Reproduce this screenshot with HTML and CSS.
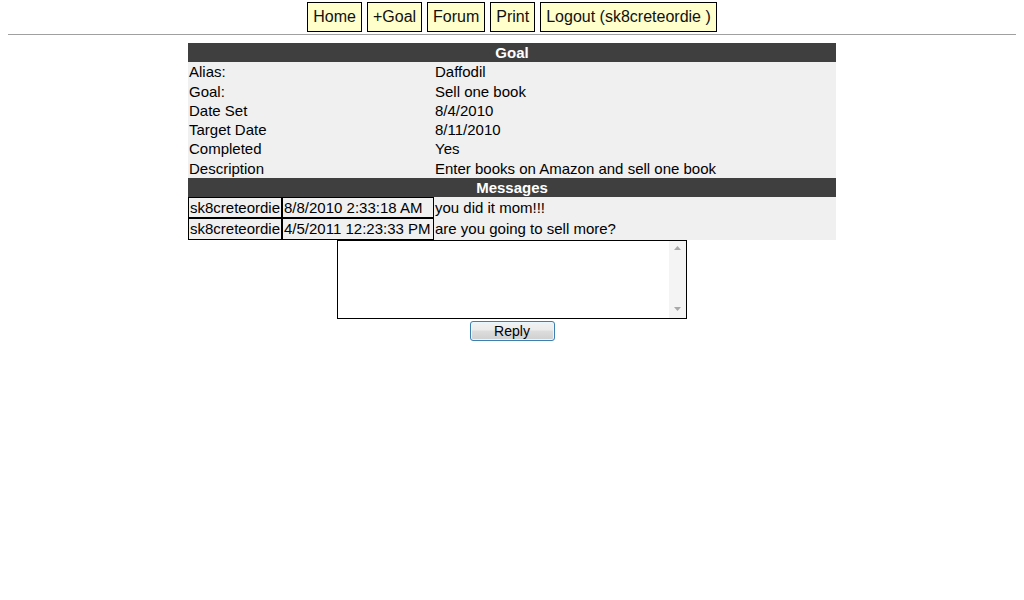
FILE: index.html
```html
<!DOCTYPE html>
<html>
<head>
<meta charset="utf-8">
<title>Goal</title>
<link rel="stylesheet" href="styles.css">
</head>
<body>
<div class="nav">
  <a class="navbtn" href="#">Home</a>
  <a class="navbtn" href="#">+Goal</a>
  <a class="navbtn" href="#">Forum</a>
  <a class="navbtn" href="#">Print</a>
  <a class="navbtn" href="#">Logout (sk8creteordie )</a>
</div>
<hr class="rule">
<table class="goal">
  <colgroup>
    <col class="c1"><col class="c2"><col class="c3">
  </colgroup>
  <tr><th colspan="3" class="head">Goal</th></tr>
  <tr><td colspan="2">Alias:</td><td>Daffodil</td></tr>
  <tr><td colspan="2">Goal:</td><td>Sell one book</td></tr>
  <tr><td colspan="2">Date Set</td><td>8/4/2010</td></tr>
  <tr><td colspan="2">Target Date</td><td>8/11/2010</td></tr>
  <tr><td colspan="2">Completed</td><td>Yes</td></tr>
  <tr><td colspan="2">Description</td><td>Enter books on Amazon and sell one book</td></tr>
  <tr><th colspan="3" class="head">Messages</th></tr>
  <tr class="mrow"><td class="box">sk8creteordie</td><td class="box">8/8/2010 2:33:18 AM</td><td>you did it mom!!!</td></tr>
  <tr class="mrow"><td class="box">sk8creteordie</td><td class="box">4/5/2011 12:23:33 PM</td><td>are you going to sell more?</td></tr>
</table>
<div class="reply">
  <div class="msgbox">
    <textarea class="msg"></textarea>
    <div class="sbar">
      <svg class="arr" width="7" height="4" viewBox="0 0 7 4"><path d="M0 4 L3.5 0 L7 4 Z" fill="#a8a8a8"/></svg>
      <svg class="arr" width="7" height="4" viewBox="0 0 7 4"><path d="M0 0 L3.5 4 L7 0 Z" fill="#a8a8a8"/></svg>
    </div>
  </div>
  <button class="replybtn" type="button">Reply</button>
</div>
</body>
</html>
```

FILE: styles.css
```css
html, body {
  background: #ffffff;
}
body {
  margin: 0 8px;
  font-family: "Liberation Sans", Arial, sans-serif;
  color: #000;
}
.nav {
  display: flex;
  justify-content: center;
  gap: 5px;
  padding-top: 2px;
  height: 30px;
}
.navbtn {
  display: block;
  box-sizing: border-box;
  height: 30px;
  padding: 5px;
  border: 1px solid #000;
  background: #ffffcc;
  color: #111;
  text-decoration: none;
  font-size: 16px;
  line-height: 18px;
}
.rule {
  margin: 2px 0 0 0;
  height: 0;
  border: 0;
  border-top: 1px solid #a0a0a0;
}
.goal {
  margin: 8px auto 0;
  width: 648px;
  table-layout: fixed;
  border-collapse: separate;
  border-spacing: 0;
  background: #f0f0f0;
  font-size: 15px;
  line-height: 17.25px;
}
.c1 { width: 94px; }
.c2 { width: 152px; }
.c3 { width: 402px; }
.goal td, .goal th {
  padding: 1px;
  text-align: left;
  white-space: nowrap;
  vertical-align: middle;
}
.goal th.head {
  background: #3f3f3f;
  color: #ffffff;
  font-weight: bold;
  text-align: center;
}
.goal td.box {
  border: 1px solid #000;
}
.reply {
  display: flex;
  flex-direction: column;
  align-items: center;
}
.msgbox {
  display: flex;
  box-sizing: border-box;
  width: 350px;
  height: 79px;
  border: 1px solid #000;
  background: #fff;
}
.msg {
  flex: 1;
  border: 0;
  margin: 0;
  padding: 2px;
  resize: none;
  outline: none;
  background: #fff;
  font-family: "Liberation Sans", Arial, sans-serif;
  font-size: 13px;
}
.sbar {
  width: 17px;
  background: #f4f4f4;
  display: flex;
  flex-direction: column;
  justify-content: space-between;
  align-items: center;
  padding: 5px 0 7px;
  box-sizing: border-box;
}
.arr {
  display: block;
}
.replybtn {
  margin-top: 2px;
  box-sizing: border-box;
  width: 85px;
  height: 20px;
  padding: 0;
  border: 1px solid #3c7fb1;
  border-radius: 3px;
  background: linear-gradient(#f2f2f2 0%, #ebebeb 45%, #dddddd 50%, #cfcfcf 100%);
  box-shadow: inset 0 0 0 1px #e8f6fd;
  font-family: "Liberation Sans", Arial, sans-serif;
  font-size: 14px;
  line-height: 16px;
  color: #000;
}
```
